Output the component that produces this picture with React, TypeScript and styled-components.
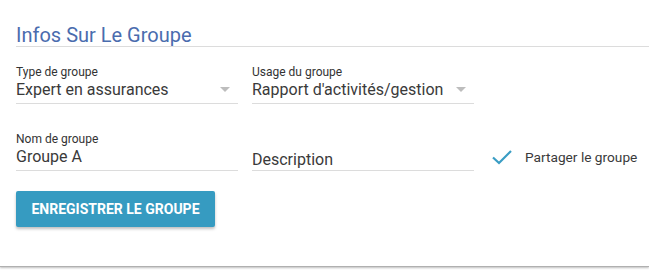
import styled, { createGlobalStyle } from 'styled-components'

const GlobalStyle = createGlobalStyle`
  html, body {
    margin: 0;
    padding: 0;
    background: #ffffff;
    font-family: Roboto, 'Liberation Sans', sans-serif;
  }
`

const App = () => {
  return (
    <>
      <GlobalStyle />
      <Page>
        <Card>
          <SectionTitle>Infos Sur Le Groupe</SectionTitle>

          <FormRow>
            <Field>
              <Label>Type de groupe</Label>
              <SelectBox>
                <Value>Expert en assurances</Value>
                <Arrow />
              </SelectBox>
            </Field>
            <Field>
              <Label>Usage du groupe</Label>
              <SelectBox>
                <Value>Rapport d'activités/gestion</Value>
                <Arrow />
              </SelectBox>
            </Field>
          </FormRow>

          <FormRow>
            <Field>
              <Label>Nom de groupe</Label>
              <InputBox>
                <Value>Groupe A</Value>
              </InputBox>
            </Field>
            <Field>
              <InputBox>
                <Placeholder>Description</Placeholder>
              </InputBox>
            </Field>
            <CheckField>
              <svg width="22" height="16" viewBox="0 0 22 16">
                <path d="M2 8.5 L8 14 L20 2" fill="none" stroke="#3a9dc4" strokeWidth="2.2" />
              </svg>
              <CheckLabel>Partager le groupe</CheckLabel>
            </CheckField>
          </FormRow>

          <SaveButton>Enregistrer le groupe</SaveButton>
        </Card>
      </Page>
    </>
  )
}

export default App

const Page = styled.div`
    width: 649px;
    height: 270px;
    background: #fff;
    overflow: hidden;
    `;

const Card = styled.div`
    width: 649px;
    height: 267px;
    box-sizing: border-box;
    background: #fff;
    padding: 25px 0 0 16px;
    border-bottom: 1px solid #b0b0b0;
    box-shadow: 0 1px 2px rgba(0, 0, 0, 0.25), -1px 0 1px rgba(0, 0, 0, 0.06);
    display: flex;
    flex-direction: column;
    align-items: flex-start;
    `;

const SectionTitle = styled.h2`
    margin: 0;
    align-self: stretch;
    font-size: 20px;
    line-height: 21px;
    font-weight: 400;
    color: #4a6cae;
    border-bottom: 1px solid #dcdcdc;
    `;

const FormRow = styled.div`
    display: flex;
    align-items: flex-end;
    gap: 14px;
    margin-top: 19px;

    & + & {
      margin-top: 29px;
    }
    `;

const Field = styled.div`
    width: 222px;
    display: flex;
    flex-direction: column;
    `;

const Label = styled.div`
    font-size: 12px;
    line-height: 13px;
    color: #333;
    `;

const SelectBox = styled.div`
    height: 25px;
    box-sizing: border-box;
    padding-bottom: 4px;
    display: flex;
    align-items: flex-end;
    justify-content: space-between;
    border-bottom: 1px solid #dcdcdc;
    `;

const InputBox = styled(SelectBox)``;

const Value = styled.span`
    font-size: 16px;
    line-height: 19px;
    color: #3a3a3a;
    white-space: nowrap;
    `;

const Placeholder = styled(Value)`
    margin-bottom: -3px;
    `;

const Arrow = styled.span`
    width: 0;
    height: 0;
    margin: 0 8px 7px 0;
    border-left: 5px solid transparent;
    border-right: 5px solid transparent;
    border-top: 5px solid #bdbdbd;
    `;

const CheckField = styled.div`
    display: flex;
    align-items: center;
    gap: 12px;
    margin-left: 3px;
    padding-bottom: 6px;
    `;

const CheckLabel = styled.span`
    font-size: 13.7px;
    color: #3a3a3a;
    `;

const SaveButton = styled.button`
    margin-top: 20px;
    width: 199px;
    height: 36px;
    border: none;
    border-radius: 2px;
    background: #369bc1;
    color: #fff;
    font-family: Roboto, 'Liberation Sans', sans-serif;
    font-size: 14px;
    font-weight: 700;
    text-transform: uppercase;
    box-shadow: 0 2px 3px rgba(0, 0, 0, 0.25);
    cursor: pointer;
    `;
